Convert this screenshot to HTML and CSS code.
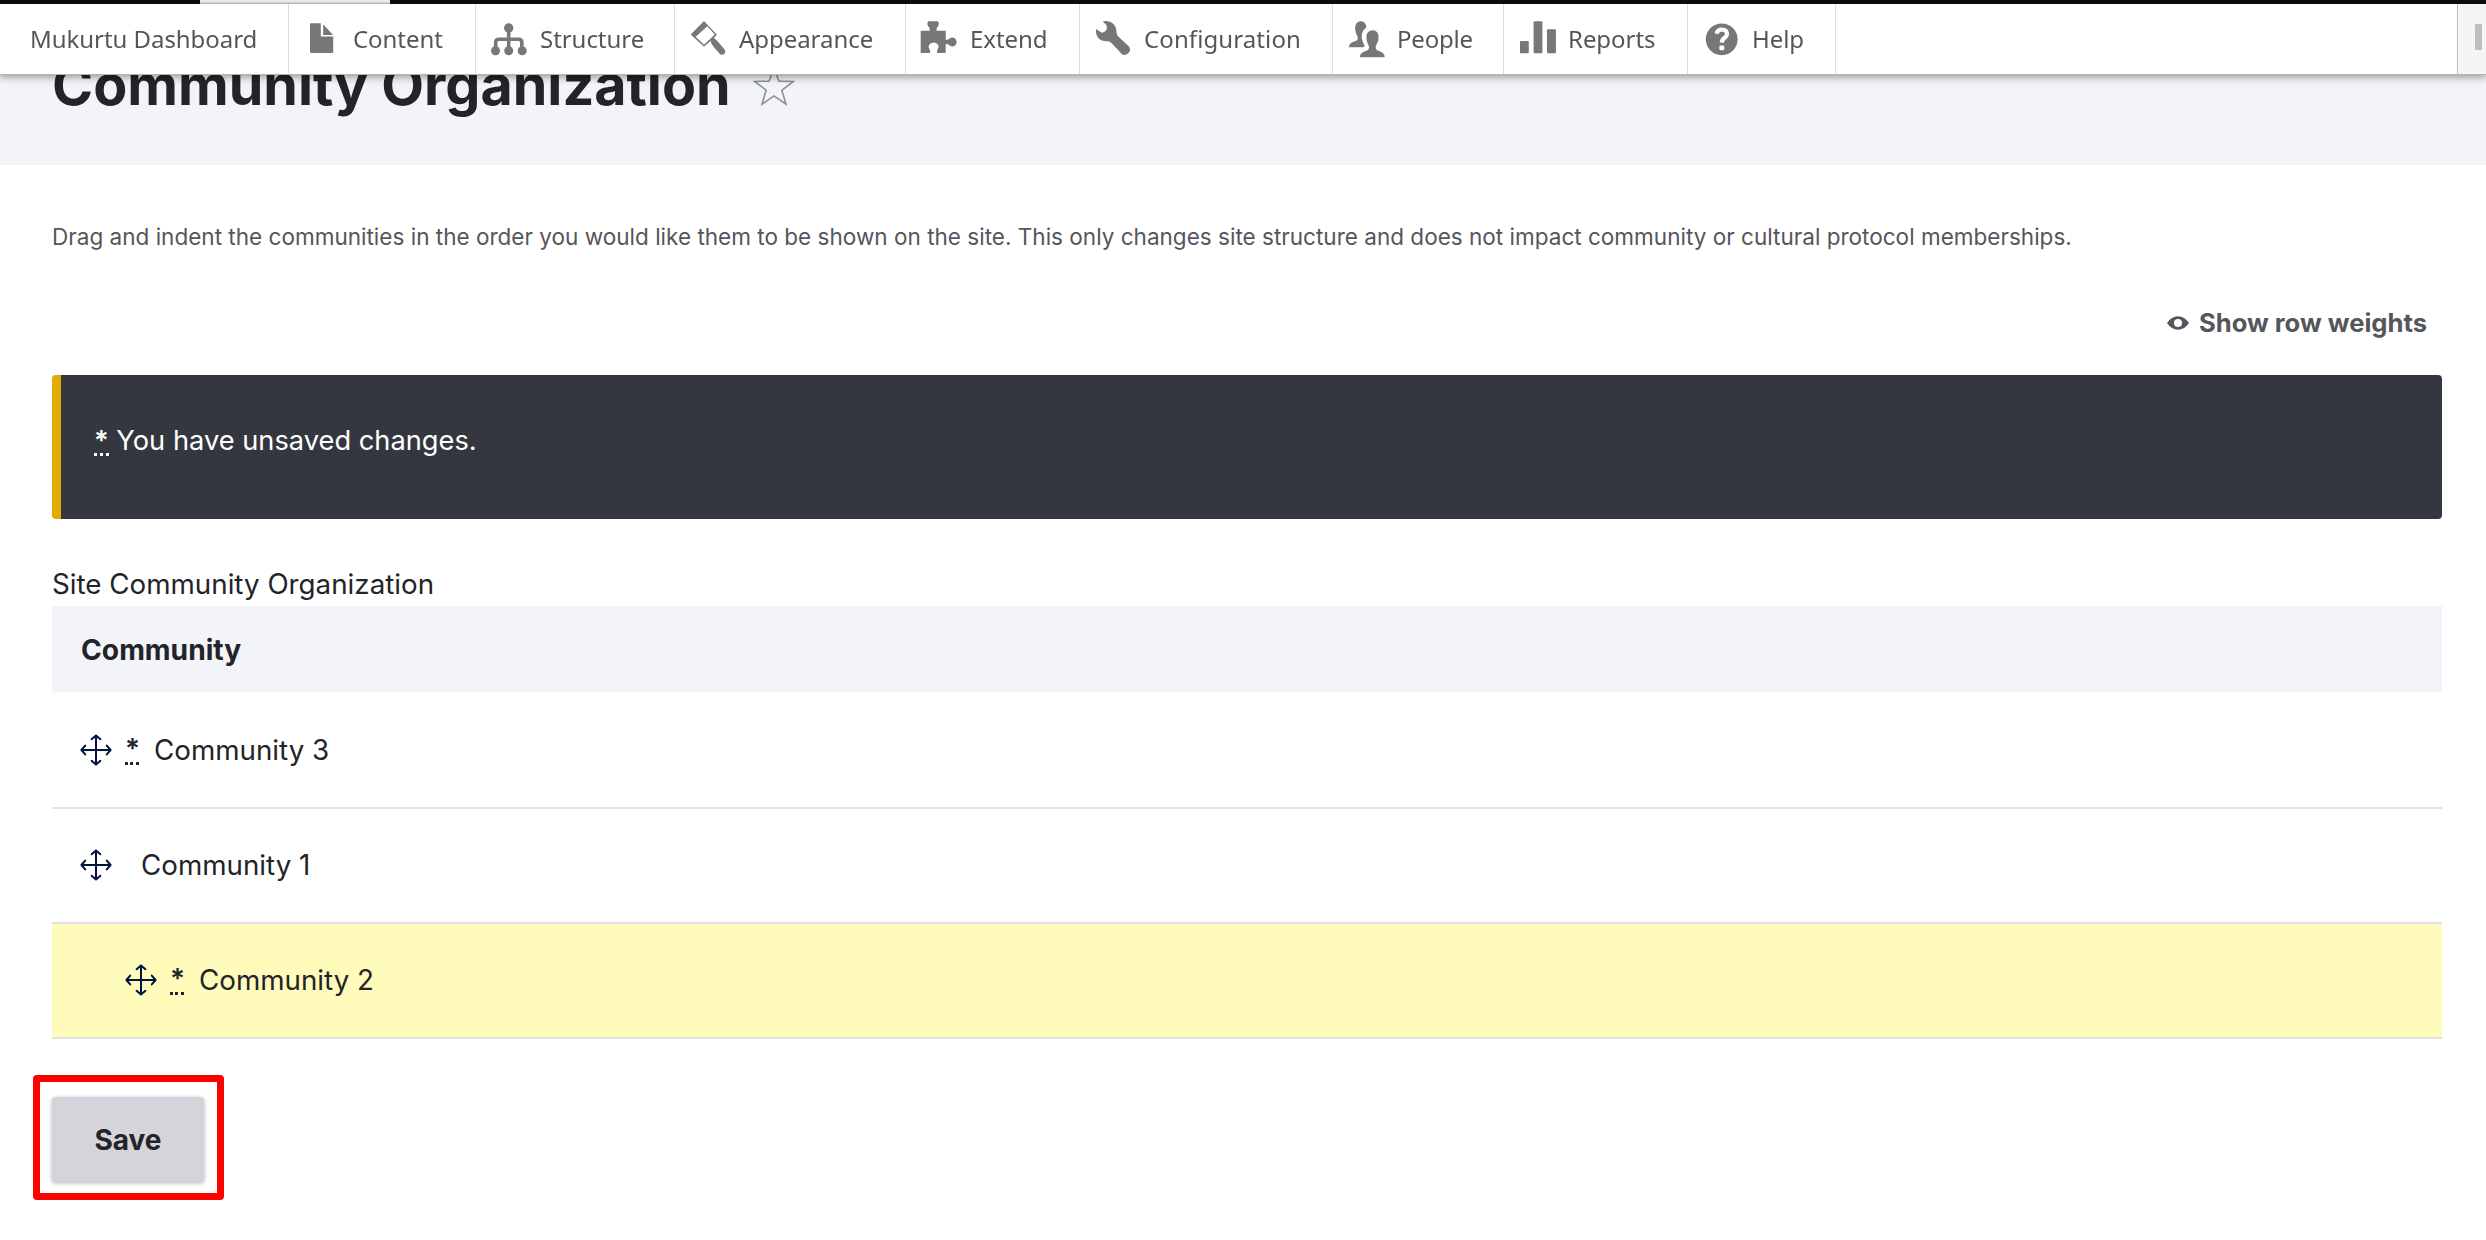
FILE: index.html
```
<!DOCTYPE html>
<html lang="en">
<head>
<meta charset="utf-8">
<title>Community Organization</title>
<link rel="stylesheet" href="styles.css">
</head>
<body>
<svg width="0" height="0" class="defs">
  <symbol id="move" viewBox="0 0 32 32"><path d="M16 2v28M2 16h28M11.6 5.2 16 1.4l4.4 3.8M11.6 26.8l4.4 3.8 4.4-3.8M5.2 11.6 1.4 16l3.8 4.4M26.8 11.6l3.8 4.4-3.8 4.4" fill="none" stroke="#001440" stroke-width="2" stroke-linecap="round" stroke-linejoin="round"/></symbol>
</svg>
<nav class="admin">
  <div class="bar"><span class="bar-tab"></span></div>
  <div class="tray">
    <a class="item dashboard">Mukurtu Dashboard</a>
    <a class="item content"><svg class="icon" viewBox="0 0 40 40"><path d="M8 5.3q0-1 1-1h9.8v13.2h12.4V33q0 1-1 1H9q-1 0-1-1z"/><path d="M21.2 5.3 31 16H21.2z"/></svg>Content</a>
    <a class="item structure"><svg class="icon" viewBox="0 0 40 40"><path d="M19.7 9v22M6.7 31v-7.500q0-3.200 3.200-3.200h19.700q3.200 0 3.200 3.200V31" fill="none" stroke="#777" stroke-width="3.600"/><circle cx="19.700" cy="9" r="4.700"/><circle cx="6.500" cy="31.700" r="4.500"/><circle cx="19.700" cy="31.700" r="4.500"/><circle cx="33.200" cy="31.700" r="4.500"/></svg>Structure</a>
    <a class="item appearance"><svg class="icon" viewBox="0 0 40 40"><path fill-rule="evenodd" d="M16 2 28.900 15.700l-3 3.300q2.700 2 5 4.800l5.500 6.400q1.700 2.500 0 4.500-2.200 2-4.500.2L25.700 28q-2.500-3.200-3.200-6l-6.500 5.700L2.700 15.400zM19.300 7.200 7.700 17.700 16 25.800l10.800-10.300z"/></svg>Appearance</a>
    <a class="item extend"><svg class="icon" viewBox="0 0 40 40"><path d="M1.700 11.700h9q.8-2.700-1.500-4.500-1.800-3 .4-4.900h9q2.300 1.800.4 4.900-2.300 1.800-1.500 4.500h9.200v9q2.300.5 3.800-1.300 3-2 5.600 0 3.200 3.500 0 7-2.600 2-5.600 0-1.500-1.800-3.800-1.200V34h-8.400q-1-2.200.5-4 1.700-2.700-.4-5.100-3.600-3-7.500 0-2.200 2.400-.5 5.100 1.500 1.800.5 4H1.700z"/></svg>Extend</a>
    <a class="item configuration"><svg class="icon" viewBox="0 0 40 40"><path d="M9.700 2.500Q13 1.500 17 2.700q5.800 2.800 6.300 8.600.1 4 1.700 6l10.700 10q2.500 3.200.3 6.200-3.300 3.700-7 1.700L18.500 24q-2-2.200-5.200-1.800-7.500-.2-9.800-6.500-.9-3-.4-5.700l5.500 3.800q3.500-.5 5.300-3.500L13.500 6z"/></svg>Configuration</a>
    <a class="item people"><svg class="icon" viewBox="0 0 40 40"><path d="M14.700 2.200c4 0 5.700 3 5.500 6.600-4 2.300-5.500 7.500-3.600 13.700.6 2 2 3.500 2 4.900l-1.500.9H3c0-4 3.400-5.400 7.300-6.600 2-1.200 1.700-3.200.7-5.200-1.400-3-1.900-5-1.800-7.800.1-3.500 2-6.500 5.500-6.500z"/><path d="M26.700 11.300c4 0 5.900 3 5.900 6.700 0 3-1 5.700-2.400 8.200-1 2-.7 4.500 1.500 5.300 3.500 1 7 2.500 7 6.800H14c0-4.300 3.500-5.800 7-6.800 2.200-.8 2.500-3.300 1.500-5.300-1.400-2.500-2.100-5.200-2.100-8.200 0-3.700 2.300-6.700 6.300-6.700z"/></svg>People</a>
    <a class="item reports"><svg class="icon" viewBox="0 0 40 40"><rect x="3" y="22" width="8.800" height="12.200" rx="1"/><rect x="16.600" y="2.300" width="8.800" height="31.900" rx="1"/><rect x="30" y="10.300" width="8.900" height="23.900" rx="1"/></svg>Reports</a>
    <a class="item help"><svg class="icon" viewBox="0 0 40 40"><circle cx="20.700" cy="20.300" r="15.900"/><path d="M15.500 14.800q1-4.300 5.400-4.300 4.900.2 5.100 4.400 0 2.200-2.300 3.900-2.700 1.900-2.800 4.800" fill="none" stroke="#fff" stroke-width="4.200"/><rect x="18.400" y="26.400" width="4.800" height="4.800" rx="1" fill="#fff"/></svg>Help</a>
    <button class="toggle" aria-label="Vertical orientation"><span></span></button>
  </div>
</nav>

<header class="page-header">
  <h1>Community Organization</h1>
  <svg class="star" viewBox="0 0 44 44"><path d="M22 1.500 27.100 15.800 42.300 16.200 30.200 25.400 34.600 40 22 31.300 9.400 40 13.800 25.400 1.700 16.200 16.900 15.800z" fill="none" stroke="#8e929c" stroke-width="1.700"/></svg>
</header>

<main class="main">
  <p class="intro">Drag and indent the communities in the order you would like them to be shown on the site. This only changes site structure and does not impact community or cultural protocol memberships.</p>
  <div class="weights"><svg width="22" height="14" viewBox="0 0 22 14"><path fill-rule="evenodd" d="M0 7Q4.500.3 11 .3T22 7q-4.500 6.700-11 6.700T0 7zM11 3a4 4 0 1 0 0 8 4 4 0 0 0 0-8z" fill="#545560"/></svg><span>Show row weights</span></div>
  <div class="message"><abbr>*</abbr> You have unsaved changes.</div>
  <section>
    <div class="caption">Site Community Organization</div>
    <div class="thead">Community</div>
    <div class="rows">
      <div class="row"><svg class="move"><use href="#move"/></svg><abbr>*</abbr><span class="name">Community 3</span></div>
      <div class="row plain"><svg class="move"><use href="#move"/></svg><span class="name">Community 1</span></div>
      <div class="row changed"><svg class="move"><use href="#move"/></svg><abbr>*</abbr><span class="name">Community 2</span></div>
    </div>
  </section>
  <div class="actions"><button class="save">Save</button></div>
</main>
</body>
</html>
```
FILE: styles.css
```
* { box-sizing: border-box; }
body {
  margin: 0;
  height: 1240px;
  overflow: hidden;
  background: #fff;
  color: #232429;
  font-family: Inter, "Liberation Sans", sans-serif;
  font-size: 27.75px;
}
.defs { position: absolute; }

/* Admin toolbar, fixed over the scrolled page */
.admin { position: fixed; top: 0; left: 0; right: 0; z-index: 2; }
.bar { height: 4px; background: #0f0f0f; padding-left: 200px; }
.bar-tab { display: block; width: 190px; height: 4px; background: #fff; border-bottom: 1px solid #ddd; }
.tray {
  display: flex;
  height: 71px;
  background: #fff;
  border-bottom: 1px solid #b4b4b4;
  box-shadow: 0 1px 8px 1px rgba(0, 0, 0, .4);
}
.item {
  display: flex;
  align-items: center;
  gap: 11px;
  padding: 0 0 0 13px;
  border-right: 1px solid #ddd;
  color: #565656;
  font: 24px/70px "Noto Sans", "Open Sans", sans-serif;
  letter-spacing: -.05px;
  white-space: nowrap;
}
.dashboard { width: 289px; padding-left: 30px; }
.content { width: 187px; }
.structure { width: 199px; }
.appearance { width: 231px; }
.extend { width: 174px; }
.configuration { width: 253px; letter-spacing: .1px; }
.people { width: 171px; letter-spacing: -.2px; }
.reports { width: 184px; }
.help { width: 148px; }
.icon { width: 40px; height: 40px; flex: none; fill: #777; }
.toggle {
  display: flex;
  align-items: center;
  width: 29px;
  margin-left: auto;
  padding: 0 0 5px 17px;
  border: 0;
  border-left: 1px solid #bbb;
  background: #f5f5f5;
}
.toggle span { width: 7px; height: 26px; background: #bebebe; border-radius: 1px; }

.page-header {
  display: flex;
  gap: 22px;
  height: 165px;
  padding: 50px 52px 0;
  background: #f3f4f9;
}
h1 { margin: 0; font-size: 55.6px; line-height: 70px; font-weight: 700; }
.star { width: 42px; height: 42px; margin-top: 16px; }

.main { padding: 57px 44px 0 52px; }
.intro { margin: 0; font-size: 22.54px; line-height: 30px; color: #55565b; white-space: nowrap; }
.weights {
  display: flex;
  align-items: center;
  justify-content: flex-end;
  gap: 10px;
  margin: 56px 15px 0 0;
  font-size: 25.6px;
  line-height: 30px;
  font-weight: 700;
  color: #55565b;
}
abbr { font-weight: 600; border-bottom: 3px dotted currentColor; }
.message {
  height: 144px;
  margin-top: 37px;
  padding: 46px 33px 0;
  border-left: 9px solid #e0ac00;
  border-radius: 4px;
  background: #353740;
  color: #fff;
  font-size: 27.26px;
  line-height: 40px;
}
.message abbr { display: inline-block; line-height: 25px; }
.caption { margin-top: 47px; line-height: 36px; }
.thead {
  height: 86px;
  margin-top: 4px;
  padding: 0 29px;
  background: #f3f4f9;
  font-size: 28.2px;
  font-weight: 700;
  line-height: 88px;
}
.rows { padding-top: 2px; }
.row {
  display: flex;
  align-items: center;
  height: 115px;
  padding: 0 0 2px 28px;
  border-bottom: 2px solid #e0e1e4;
}
.row abbr { width: 14px; margin: 0 15px 0 13px; line-height: 27px; }
.plain .name { margin-left: 29px; }
.changed { padding-left: 73px; background: #fefbbb; }
.move { width: 32px; height: 32px; }
.actions {
  display: inline-flex;
  margin: 36px 0 0 -19px;
  padding: 15px 13px 11px 12px;
  border: 7px solid #f00;
  border-radius: 4px;
}
.save {
  width: 152px;
  height: 85px;
  padding: 0;
  border: 0;
  border-radius: 4px;
  background: #d4d4da;
  box-shadow: 0 1px 4px rgba(0, 0, 0, .3);
  color: #232429;
  font: 700 28px Inter, sans-serif;
}
```
